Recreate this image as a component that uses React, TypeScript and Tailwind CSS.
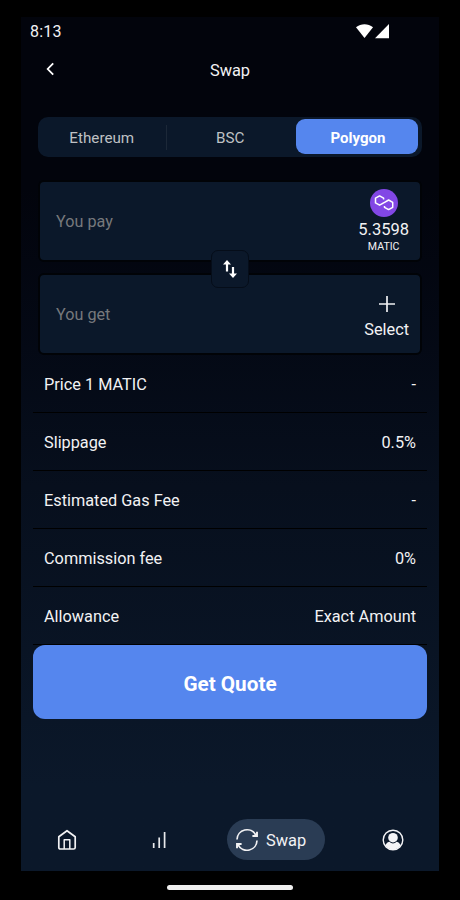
import React from 'react';

const NETWORKS = ['Ethereum', 'BSC', 'Polygon'];

const DETAILS = [
  { label: 'Price 1 MATIC', value: '-' },
  { label: 'Slippage', value: '0.5%' },
  { label: 'Estimated Gas Fee', value: '-' },
  { label: 'Commission fee', value: '0%' },
  { label: 'Allowance', value: 'Exact Amount' }
];

function StatusBar() {
  return (
    <div className="flex h-[29px] items-center justify-between pl-[9px] pr-[49px]">
      <span className="text-[16px] leading-5 tracking-[0.2px]">8:13</span>
      <svg width="35" height="16" viewBox="0 0 35 16" fill="#fff" className="-mt-[2px]">
        <path d="M1 4.2C6 0.2 13 0.2 18 4.2L9.5 15Z" />
        <path d="M34 1V15.2H20Z" />
      </svg>
    </div>);

}

function Header() {
  return (
    <header className="grid h-[48px] grid-cols-3 items-center px-[24px]">
      <svg width="10" height="14" viewBox="0 0 10 14" fill="none" stroke="#fff" strokeWidth="1.8" className="-mt-[2px]">
        <path d="M8.2 1.3L2.7 7L8.2 12.7" />
      </svg>
      <h1 className="pt-[2px] text-center text-[16.4px] leading-5">Swap</h1>
    </header>);

}

function NetworkTabs({ active }: { active: string }) {
  return (
    <div className="mx-[17px] mt-[23px] flex h-[40px] items-center rounded-[10px] bg-[#0b182a] pr-[4px]">
      {NETWORKS.map((name, i) =>
      <React.Fragment key={name}>
          {i === 1 && <div className="h-[25px] w-px bg-[#1c2838]" />}
          <button
          className={
          name === active ?
          '-mt-px h-[35px] w-[122px] rounded-[9px] bg-[#5586ee] pt-[4px] pl-[2px] text-[15px] font-bold text-white' :
          'h-[35px] flex-1 pt-[3px] pr-[2px] text-[15.2px] text-[#bfc1c4] first:pr-0'
          }>
            {name}
          </button>
        </React.Fragment>
      )}
    </div>);

}

function PolygonIcon() {
  return (
    <svg width="28" height="28" viewBox="0 0 28 28" fill="none">
      <circle cx="14" cy="14" r="14" fill="#8247e5" />
      <path
        d="M13.6 10.4V9.2L9.6 6.9L5.5 9.2V13.9L9.6 16.2L13.6 13.9L14.6 13.3L18.6 11L22.7 13.4V18.3L18.6 20.6L14.5 18.3V16.9"
        stroke="#fff"
        strokeWidth="1.5"
        strokeLinejoin="round" />
    </svg>);

}

function SwapPanel() {
  return (
    <section className="relative mx-[17px] mt-[23px] flex flex-col gap-[11px]">
      <div className="flex h-[82px] items-center justify-between rounded-[6px] border-2 border-[#010307] bg-[#0b182a] pl-[16px] pr-[11px]">
        <span className="pt-[2px] text-[16.2px] text-[#77797c]">You pay</span>
        <div className="flex flex-col items-center pt-px">
          <PolygonIcon />
          <span className="mt-[3px] text-[16.5px] leading-5">5.3598</span>
          <span className="text-[10.6px] leading-[14px]">MATIC</span>
        </div>
      </div>
      <div className="flex h-[82px] items-center justify-between rounded-[6px] border-2 border-[#010307] bg-[#0b182a] pl-[16px] pr-[11px]">
        <span className="pt-[2px] text-[16.2px] text-[#77797c]">You get</span>
        <div className="flex flex-col items-center pt-[7px]">
          <svg width="16" height="16" viewBox="0 0 16 16" stroke="#f0f0f2" strokeWidth="1.7">
            <path d="M8 0V16M0 8H16" />
          </svg>
          <span className="mt-[8px] text-[16.3px] leading-5">Select</span>
        </div>
      </div>
      <button className="absolute left-1/2 top-[70px] flex h-[38px] w-[38px] -translate-x-1/2 items-center justify-center rounded-[7px] border border-[#050d19] bg-[#0b182a]">
        <svg width="16" height="20" viewBox="0 0 16 20" fill="#fff">
          <path d="M5 1L9 5.4H6.1V12.5H3.9V5.4H1Z" />
          <path d="M11 19L7 14.6H9.9V8H12.1V14.6H15Z" />
        </svg>
      </button>
    </section>);

}

function BottomNav() {
  return (
    <nav className="mb-[11px] mt-auto flex h-[41px] items-center pl-[36px] pr-[35px]">
      <svg width="20" height="22" viewBox="0 0 20 22" fill="none" stroke="#f2f2f4" strokeWidth="1.7" strokeLinejoin="round">
        <path d="M1.8 7.8L10 1.7L18.2 7.8V18.4Q18.2 20 16.6 20H3.4Q1.8 20 1.8 18.4Z" />
        <path d="M7.2 20V10.7H12.8V20" strokeWidth="1.5" />
      </svg>
      <svg width="14" height="18" viewBox="0 0 14 18" stroke="#e8e9ec" strokeWidth="1.7" className="ml-[75px]">
        <path d="M1.7 12V17M7.2 6.5V17M12.6 1V17" />
      </svg>
      <div className="ml-[61px] flex h-[41px] w-[98px] items-center rounded-full bg-[#2a3c54] pl-[8px]">
        <svg width="24" height="24" viewBox="0 0 24 24" fill="none" stroke="#f2f2f4" strokeWidth="1.7">
          <path d="M2 11.5A10 10 0 0 1 20.8 7M22 12.5A10 10 0 0 1 3.2 17" />
          <path d="M22 3.8V8H17.4M2 20.2V16H6.6" strokeWidth="1.9" />
          <path d="M22 5L18 8H22ZM2 19L6 16H2Z" fill="#f2f2f4" stroke="none" />
        </svg>
        <span className="ml-[7px] pt-[2px] text-[16.4px] leading-5">Swap</span>
      </div>
      <svg width="22" height="22" viewBox="0 0 22 22" className="ml-auto">
        <circle cx="11" cy="11" r="9.8" fill="none" stroke="#f4f4f6" strokeWidth="1.4" />
        <circle cx="11" cy="8.7" r="4.8" fill="#f4f4f6" />
        <path d="M3.3 16.5C4.5 13.8 6.4 12.8 7.6 12.8C9.3 15 12.7 15 14.4 12.8C15.6 12.8 17.5 13.8 18.7 16.5C15.4 22 6.6 22 3.3 16.5Z" fill="#f4f4f6" />
      </svg>
    </nav>);

}

export default function App() {
  return (
    <div className="flex h-[900px] w-[460px] flex-col bg-black pt-[17px] font-['Roboto',sans-serif] text-[#f2f2f4]">
      <main className="ml-[21px] flex h-[854px] w-[418px] flex-col bg-linear-to-b from-[#02040c] from-20% via-[#070f1d] via-55% to-[#0b182a] to-90%">
        <StatusBar />
        <Header />
        <NetworkTabs active="Polygon" />
        <SwapPanel />
        <section className="mx-[12px]">
          {DETAILS.map((row) =>
          <div
            key={row.label}
            className="flex h-[58px] items-center justify-between border-b border-black px-[11px] pt-[4px] text-[16.3px]">
              <span>{row.label}</span>
              <span>{row.value}</span>
            </div>
          )}
        </section>
        <button className="mx-[12px] h-[74px] rounded-[12px] bg-[#5586ee] pt-[5px] text-[20.7px] font-bold text-white">
          Get Quote
        </button>
        <BottomNav />
      </main>
      <div className="mx-auto mt-[14px] h-[5px] w-[126px] rounded-full bg-[#efefef]" />
    </div>);

}
